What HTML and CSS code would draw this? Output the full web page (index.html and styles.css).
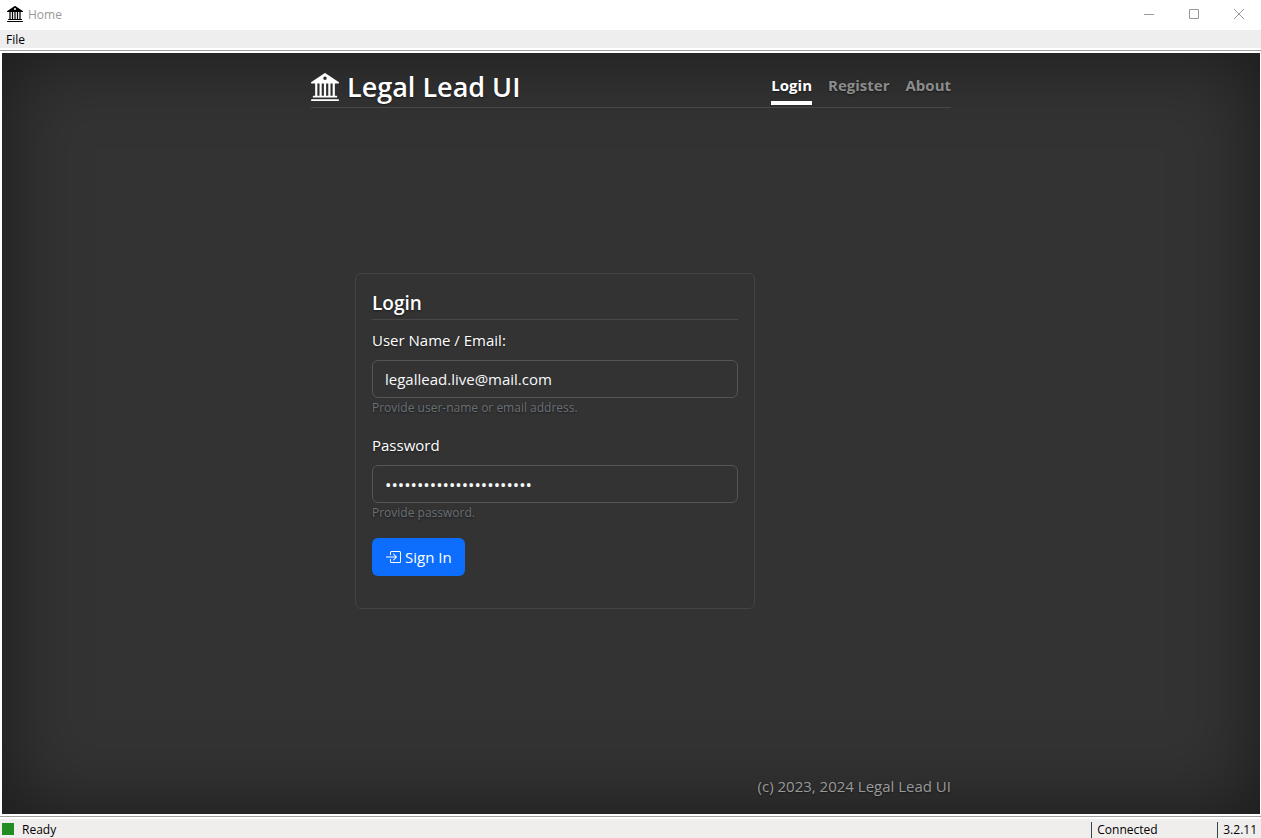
FILE: index.html
```html
<!DOCTYPE html>
<html lang="en">
<head>
<meta charset="utf-8">
<title>Home</title>
<link rel="stylesheet" href="styles.css">
</head>
<body>
<svg class="sprite" aria-hidden="true">
  <symbol id="bank" viewBox="0 0 16 16"><path d="M8.277.084a.5.5 0 0 0-.554 0l-7.5 5A.5.5 0 0 0 .5 6h1.875v7H1.5a.5.5 0 0 0 0 1h13a.5.5 0 1 0 0-1h-.875V6H15.5a.5.5 0 0 0 .277-.916zM12.375 6v7h-1.25V6zm-2.5 0v7h-1.25V6zm-2.5 0v7h-1.25V6zm-2.5 0v7h-1.25V6zM8 4a1 1 0 1 1 0-2 1 1 0 0 1 0 2M.5 15a.5.5 0 0 0 0 1h15a.5.5 0 1 0 0-1z"/></symbol>
</svg>
<div class="window">
  <div class="titlebar">
    <svg class="app-icon" aria-hidden="true"><use href="#bank"/></svg>
    <span class="window-title">Home</span>
    <div class="window-buttons">
      <button type="button" aria-label="Minimize"><svg viewBox="0 0 12 12"><path d="M1 6.500h10"/></svg></button>
      <button type="button" aria-label="Maximize"><svg viewBox="0 0 12 12"><path d="M1.500 1.500h9v9h-9z"/></svg></button>
      <button type="button" aria-label="Close"><svg viewBox="0 0 12 12"><path d="M1 1l10 10M11 1L1 11"/></svg></button>
    </div>
  </div>
  <div class="menubar"><button type="button">File</button></div>
  <div class="viewport">
    <div class="page">
      <div class="cover">
        <header class="masthead">
          <h1 class="brand"><svg class="brand-icon" aria-hidden="true"><use href="#bank"/></svg>Legal Lead UI</h1>
          <nav class="nav">
            <a class="nav-link active" href="#login" aria-current="page">Login</a>
            <a class="nav-link" href="#register">Register</a>
            <a class="nav-link" href="#about">About</a>
          </nav>
        </header>
        <main class="main">
          <form class="card">
            <h2 class="card-title">Login</h2>
            <div class="field">
              <label for="username">User Name / Email:</label>
              <input id="username" type="text" value="legallead.live@mail.com" aria-describedby="username-help">
              <p class="help" id="username-help">Provide user-name or email address.</p>
            </div>
            <div class="field">
              <label for="password">Password</label>
              <input id="password" class="password" type="password" value="abcdefghijklmnopqrstuvw" aria-describedby="password-help">
              <p class="help" id="password-help">Provide password.</p>
            </div>
            <button class="submit" type="submit"><svg viewBox="0 0 16 16" aria-hidden="true"><path d="M6 3.500a.5.5 0 0 1 .5-.5h8a.5.5 0 0 1 .5.5v9a.5.5 0 0 1-.5.5h-8a.5.5 0 0 1-.5-.5v-2a.5.5 0 0 0-1 0v2A1.500 1.500 0 0 0 6.500 14h8a1.500 1.500 0 0 0 1.500-1.500v-9A1.500 1.500 0 0 0 14.500 2h-8A1.500 1.500 0 0 0 5 3.500v2a.5.5 0 0 0 1 0z"/><path d="M11.854 8.354a.5.5 0 0 0 0-.708l-3-3a.5.5 0 1 0-.708.708L10.293 7.500H1.500a.5.5 0 0 0 0 1h8.793l-2.147 2.146a.5.5 0 0 0 .708.708z"/></svg>Sign In</button>
          </form>
        </main>
        <footer class="footer">(c) 2023, 2024 Legal Lead UI</footer>
      </div>
    </div>
  </div>
  <div class="statusbar">
    <span class="status-light"></span>
    <span class="status-text">Ready</span>
    <span class="status-cell connection">Connected</span>
    <span class="status-cell">3.2.11</span>
  </div>
</div>
</body>
</html>
```
FILE: styles.css
```css
* { box-sizing: border-box; }

body {
  margin: 0;
  font-family: "Open Sans", "Noto Sans", sans-serif;
  background: #fff;
}

h1, h2, p { margin: 0; }
button, input { font: inherit; }
.sprite { display: none; }

.window {
  display: flex;
  flex-direction: column;
  min-height: 100vh;
  font-size: 12px;
  color: #000;
}

.titlebar {
  display: flex;
  align-items: center;
  height: 30px;
  padding: 0 0 2px 7px;
}
.app-icon { width: 16px; height: 16px; margin-right: 5px; }
.window-title { color: #999; }
.window-buttons { display: flex; margin-left: auto; }
.window-buttons button {
  display: flex;
  align-items: center;
  justify-content: center;
  width: 45px;
  height: 28px;
  padding: 0;
  border: 0;
  background: none;
}
.window-buttons svg {
  width: 12px;
  height: 12px;
  fill: none;
  stroke: #999;
}

.menubar {
  height: 18px;
  background: #eee;
}
.menubar button {
  display: block;
  padding: 0 6px;
  border: 0;
  background: none;
  color: #000;
  line-height: 19px;
}

.viewport {
  display: flex;
  flex: 1;
  margin: 2px 0;
  padding: 2px 1px 2px 2px;
  border-top: 1px solid #a0a0a0;
  border-bottom: 1px solid #a0a0a0;
}
.page {
  display: flex;
  flex: 1;
  justify-content: center;
  background: #333;
  box-shadow: inset 0 0 80px rgba(0, 0, 0, .5);
  color: #fff;
  font-size: 15px;
  line-height: 24px;
  text-shadow: 0 1px 2px rgba(0, 0, 0, .5);
}
.cover {
  display: flex;
  flex-direction: column;
  width: 100%;
  max-width: 672px;
  padding: 16px;
}

.masthead {
  display: flex;
  justify-content: space-between;
  height: 39px;
  border-bottom: 1px solid #484848;
}
.brand {
  display: flex;
  align-items: center;
  gap: 8px;
  height: 36px;
  font-size: 27px;
  font-weight: 600;
  line-height: 36px;
}
.brand-icon { width: 28px; height: 28px; fill: #fff; }
.nav { display: flex; gap: 16px; }
.nav-link {
  height: 36px;
  padding-top: 4px;
  border-bottom: 4px solid transparent;
  color: #8c8c8c;
  font-weight: 700;
  text-decoration: none;
}
.nav-link.active { border-color: #fff; color: #fff; }

.main {
  display: flex;
  flex: 1;
  align-items: center;
  padding: 0 44px;
}
.card {
  width: 100%;
  max-width: 400px;
  padding: 16px 16px 32px;
  border: 1px solid #444;
  border-radius: 6px;
}
.card-title {
  margin-bottom: 8px;
  padding-bottom: 3px;
  border-bottom: 1px solid #484848;
  font-size: 19px;
  font-weight: 600;
  line-height: 26px;
}
.field { margin-bottom: 16px; }
.field label {
  display: block;
  margin-bottom: 8px;
}
.field input {
  display: block;
  width: 100%;
  height: 38px;
  padding: 6px 12px;
  border: 1px solid #555;
  border-radius: 6px;
  outline: 0;
  background: #333;
  color: #f8f9fa;
}
.field .password { font-size: 17px; }
.help {
  color: #6a7076;
  font-size: 12px;
  line-height: 19px;
}
.submit {
  display: flex;
  align-items: center;
  gap: 4px;
  height: 38px;
  padding: 0 13px;
  border: 0;
  border-radius: 6px;
  background: #0d6efd;
  color: #fff;
}
.submit svg { width: 16px; height: 16px; fill: currentColor; }

.footer {
  color: #999;
  text-align: right;
}

.statusbar {
  display: flex;
  align-items: flex-end;
  height: 19px;
  padding-left: 2px;
  background: #f0eded;
  line-height: 16px;
}
.status-light {
  align-self: center;
  width: 12px;
  height: 12px;
  margin-right: 8px;
  background: #228b22;
}
.status-text { margin-right: auto; }
.status-cell {
  padding: 0 4px 0 5px;
  border-left: 1px solid #34454f;
}
.connection { width: 126px; }
```
